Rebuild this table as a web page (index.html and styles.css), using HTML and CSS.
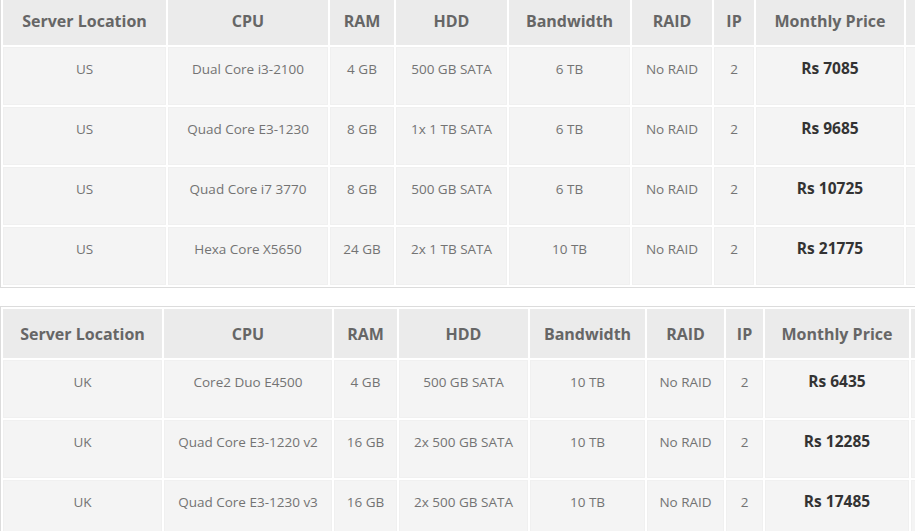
FILE: index.html
```html
<!DOCTYPE html>
<html>
<head>
<meta charset="utf-8">
<link rel="stylesheet" href="styles.css">
</head>
<body>
<div class="page">
  <table class="plans plans-us">
    <colgroup>
      <col class="c1"><col class="c2"><col class="c3"><col class="c4"><col class="c5"><col class="c6"><col class="c7"><col class="c8"><col class="c9">
    </colgroup>
    <thead>
      <tr><th>Server Location</th><th>CPU</th><th>RAM</th><th>HDD</th><th>Bandwidth</th><th>RAID</th><th>IP</th><th>Monthly Price</th><th></th></tr>
    </thead>
    <tbody>
      <tr><td>US</td><td>Dual Core i3-2100</td><td>4 GB</td><td>500 GB SATA</td><td>6 TB</td><td>No RAID</td><td>2</td><td class="price">Rs 7085</td><td></td></tr>
      <tr><td>US</td><td>Quad Core E3-1230</td><td>8 GB</td><td>1x 1 TB SATA</td><td>6 TB</td><td>No RAID</td><td>2</td><td class="price">Rs 9685</td><td></td></tr>
      <tr><td>US</td><td>Quad Core i7 3770</td><td>8 GB</td><td>500 GB SATA</td><td>6 TB</td><td>No RAID</td><td>2</td><td class="price">Rs 10725</td><td></td></tr>
      <tr><td>US</td><td>Hexa Core X5650</td><td>24 GB</td><td>2x 1 TB SATA</td><td>10 TB</td><td>No RAID</td><td>2</td><td class="price">Rs 21775</td><td></td></tr>
    </tbody>
  </table>

  <table class="plans plans-uk">
    <colgroup>
      <col class="c1"><col class="c2"><col class="c3"><col class="c4"><col class="c5"><col class="c6"><col class="c7"><col class="c8"><col class="c9">
    </colgroup>
    <thead>
      <tr><th>Server Location</th><th>CPU</th><th>RAM</th><th>HDD</th><th>Bandwidth</th><th>RAID</th><th>IP</th><th>Monthly Price</th><th></th></tr>
    </thead>
    <tbody>
      <tr><td>UK</td><td>Core2 Duo E4500</td><td>4 GB</td><td>500 GB SATA</td><td>10 TB</td><td>No RAID</td><td>2</td><td class="price">Rs 6435</td><td></td></tr>
      <tr><td>UK</td><td>Quad Core E3-1220 v2</td><td>16 GB</td><td>2x 500 GB SATA</td><td>10 TB</td><td>No RAID</td><td>2</td><td class="price">Rs 12285</td><td></td></tr>
      <tr><td>UK</td><td>Quad Core E3-1230 v3</td><td>16 GB</td><td>2x 500 GB SATA</td><td>10 TB</td><td>No RAID</td><td>2</td><td class="price">Rs 17485</td><td></td></tr>
    </tbody>
  </table>
</div>
</body>
</html>
```

FILE: styles.css
```css
html, body {
  margin: 0;
  padding: 0;
  background: #ffffff;
  overflow: hidden;
}

.page {
  width: 915px;
  height: 531px;
  overflow: hidden;
  font-family: "Open Sans", "Liberation Sans", sans-serif;
}

.plans {
  table-layout: fixed;
  border-collapse: separate;
  border-spacing: 2px;
  border: 1px solid #dcdcdc;
  background: #ffffff;
}

.plans-us {
  width: 969px;
  margin-top: -7px;
  margin-bottom: 18px;
}

.plans-uk {
  width: 974px;
}

.plans th,
.plans td {
  text-align: center;
  vertical-align: top;
  border: 1px solid #ebebeb;
  overflow: hidden;
  white-space: nowrap;
  padding-left: 0;
  padding-right: 0;
}

.plans th {
  background: #ebebeb;
  color: #666666;
  font-weight: 700;
  font-size: 16px;
  line-height: 22px;
  padding-top: 13px;
  padding-bottom: 12px;
}

.plans td {
  background: #f4f4f4;
  border-color: #f0f0f0;
  color: #737373;
  font-size: 13.5px;
  line-height: 20px;
  padding-top: 11px;
  padding-bottom: 25px;
}

.plans td.price {
  color: #333333;
  font-weight: 700;
  font-size: 15.5px;
  line-height: 20px;
  padding-top: 10px;
  padding-bottom: 26px;
}

.plans-us .c1 { width: 163px; }
.plans-us .c2 { width: 160px; }
.plans-us .c3 { width: 64px; }
.plans-us .c4 { width: 111px; }
.plans-us .c5 { width: 121px; }
.plans-us .c6 { width: 80px; }
.plans-us .c7 { width: 40px; }
.plans-us .c8 { width: 148px; }
.plans-us .c9 { width: 60px; }

.plans-uk .c1 { width: 159px; }
.plans-uk .c2 { width: 168px; }
.plans-uk .c3 { width: 63px; }
.plans-uk .c4 { width: 129px; }
.plans-uk .c5 { width: 115px; }
.plans-uk .c6 { width: 77px; }
.plans-uk .c7 { width: 37px; }
.plans-uk .c8 { width: 144px; }
.plans-uk .c9 { width: 60px; }
```
